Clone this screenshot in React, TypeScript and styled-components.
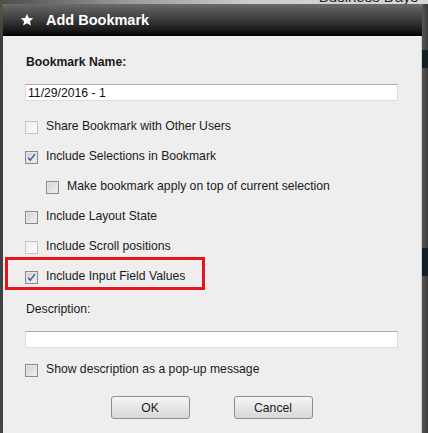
import React from 'react'
import styled, { createGlobalStyle, css } from 'styled-components'

const GlobalStyle = createGlobalStyle`
  html, body {
    margin: 0;
    padding: 0;
    background: #3b3d3d;
    font-family: "Liberation Sans", Arial, sans-serif;
  }
`

const Page = styled.div`
  display: grid;
  grid-template-columns: 3px 419px 6px;
  grid-template-rows: 4px 429px;
  width: 428px;
  height: 433px;
  overflow: hidden;
`

const TopStrip = styled.div`
  grid-column: 1 / 4;
  display: flex;
  align-items: flex-end;
  justify-content: flex-end;
  padding-right: 10px;
  overflow: hidden;
  background: linear-gradient(to right, #4a4d48 0%, #9a9a9a 30%, #cfcfcf 60%, #d6d6d6 100%);
`

const StripText = styled.span`
  font-size: 15px;
  line-height: 15px;
  color: #1e2a33;
  white-space: nowrap;
`

const LeftGutter = styled.div`
  background: linear-gradient(to bottom, #505a3e 0%, #3c3c3c 8%, #444 100%);
`

const RightGutter = styled.div`
  display: flex;
  flex-direction: column;
  background: linear-gradient(to right, #555 0%, #3a3a3a 100%);
`

const GutterBlock = styled.div<{ $top: number; $height: number }>`
  margin-top: ${({ $top }) => $top}px;
  height: ${({ $height }) => $height}px;
  background: #132028;
`

const Dialog = styled.div`
  display: flex;
  flex-direction: column;
  border-radius: 3px 3px 0 0;
  overflow: hidden;
  background: #eeeeee;
  box-shadow: inset -1px 0 0 #cfcfcf;
`

const TitleBar = styled.div`
  display: flex;
  align-items: center;
  gap: 12px;
  height: 32px;
  padding-left: 17px;
  background: linear-gradient(to bottom, #6a6a6a 0%, #444 40%, #1c1c1c 80%, #000 100%);
`

const Title = styled.h1`
  margin: 0;
  font-size: 14.5px;
  font-weight: 700;
  color: #fff;
`

const Body = styled.div`
  display: flex;
  flex-direction: column;
  padding: 19px 24px 0 19px;
`

const FieldLabel = styled.div<{ $bold?: boolean }>`
  font-size: 12.2px;
  line-height: 14px;
  color: #1a1a1a;
  font-weight: ${({ $bold }) => ($bold ? 700 : 400)};
  padding-left: 4px;
`

const TextInput = styled.input`
  box-sizing: border-box;
  width: 373px;
  height: 17px;
  margin: 15px 0 0 3px;
  padding: 0 2px;
  border: 1px solid #dcdcdc;
  border-top-color: #a9a9b0;
  background: #fff;
  font-family: "Liberation Sans", Arial, sans-serif;
  font-size: 12.2px;
  color: #111;
  outline: none;
`

const Options = styled.div<{ $gap?: number }>`
  display: flex;
  flex-direction: column;
  margin-top: ${({ $gap }) => $gap ?? 10}px;
`

const OptionRow = styled.label<{ $indent?: boolean; $marked?: boolean }>`
  position: relative;
  display: flex;
  align-items: center;
  gap: 8px;
  height: 30px;
  padding-left: ${({ $indent }) => ($indent ? 24 : 3)}px;
  font-size: 12.2px;
  color: #1a1a1a;
  ${({ $marked }) =>
    $marked &&
    css`
      &::after {
        content: '';
        position: absolute;
        left: -17px;
        top: -4px;
        width: 194px;
        height: 27px;
        border: 3px solid #e8141c;
      }
    `}
`

const Box = styled.span<{ $framed?: boolean }>`
  box-sizing: border-box;
  display: flex;
  align-items: center;
  justify-content: center;
  width: 13px;
  height: 13px;
  margin-top: 2px;
  border: 1px solid ${({ $framed }) => ($framed ? '#8c8c8c' : '#c4c4c4')};
  background: ${({ $framed }) =>
    $framed ? 'linear-gradient(135deg, #d0d0d0, #f2f2f2)' : 'linear-gradient(135deg, #f0f0f0, #fbfbfb)'};
  box-shadow: ${({ $framed }) => ($framed ? 'inset 0 0 0 1px #e6e6e6' : 'none')};
`

const Buttons = styled.div`
  display: flex;
  justify-content: center;
  gap: 44px;
  margin-top: 12px;
  padding-left: 3px;
`

const Button = styled.button`
  width: 79px;
  height: 23px;
  border: 1px solid #8e8e8e;
  border-radius: 3px;
  background: linear-gradient(to bottom, #f6f6f6 0%, #e6e6e6 50%, #d8d8d8 100%);
  font-family: "Liberation Sans", Arial, sans-serif;
  font-size: 12.2px;
  color: #222;
`

const Star = () => (
  <svg width="14" height="14" viewBox="0 0 24 24">
    <path
      fill="#fff"
      d="M12 1.5l3.2 7 7.5.7-5.7 5 1.7 7.4L12 17.7l-6.7 3.9 1.7-7.4-5.7-5 7.5-.7z"
    />
  </svg>
)

const Check = () => (
  <svg width="9" height="9" viewBox="0 0 10 10">
    <path d="M1.2 5.2l2.4 2.8L8.8 1.2" fill="none" stroke="#3d55a8" strokeWidth="1.6" />
  </svg>
)

interface CheckOptionProps {
  text: string
  checked?: boolean
  framed?: boolean
  indent?: boolean
  marked?: boolean
}

const CheckOption: React.FC<CheckOptionProps> = ({ text, checked, framed, indent, marked }) => (
  <OptionRow $indent={indent} $marked={marked}>
    <Box $framed={framed || checked}>{checked && <Check />}</Box>
    {text}
  </OptionRow>
)

export default function App() {
  return (
    <>
      <GlobalStyle />
      <Page>
        <TopStrip>
          <StripText>Business Days</StripText>
        </TopStrip>
        <LeftGutter />
        <Dialog>
          <TitleBar>
            <Star />
            <Title>Add Bookmark</Title>
          </TitleBar>
          <Body>
            <FieldLabel $bold>Bookmark Name:</FieldLabel>
            <TextInput defaultValue="11/29/2016 - 1" />
            <Options>
              <CheckOption text="Share Bookmark with Other Users" />
              <CheckOption text="Include Selections in Bookmark" checked />
              <CheckOption text="Make bookmark apply on top of current selection" framed indent />
              <CheckOption text="Include Layout State" framed />
              <CheckOption text="Include Scroll positions" />
              <CheckOption text="Include Input Field Values" checked marked />
            </Options>
            <Options $gap={11}>
              <FieldLabel>Description:</FieldLabel>
            </Options>
            <TextInput />
            <Options $gap={6}>
              <CheckOption text="Show description as a pop-up message" framed />
            </Options>
            <Buttons>
              <Button>OK</Button>
              <Button>Cancel</Button>
            </Buttons>
          </Body>
        </Dialog>
        <RightGutter>
          <GutterBlock $top={46} $height={18} />
          <GutterBlock $top={180} $height={28} />
        </RightGutter>
      </Page>
    </>
  )
}
